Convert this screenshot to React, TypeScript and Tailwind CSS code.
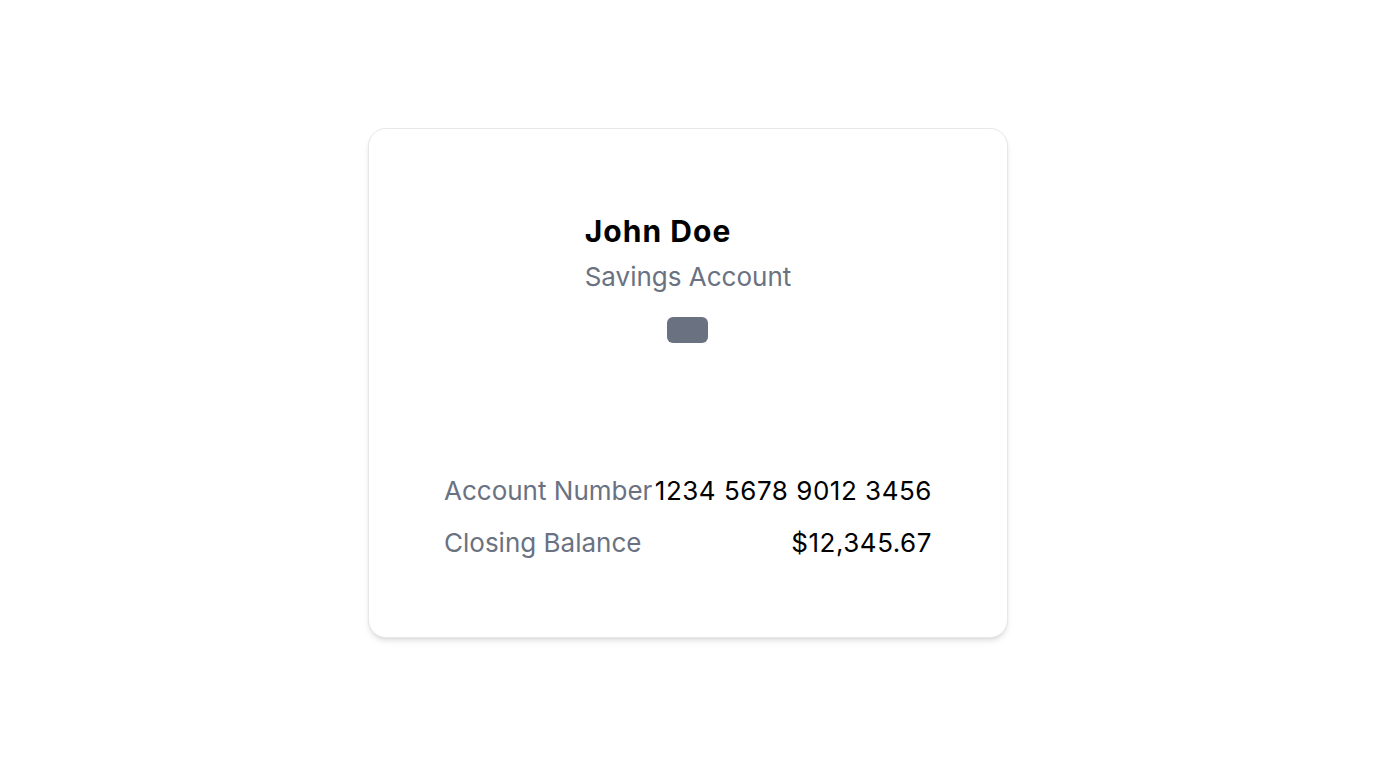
import React from 'react';

const rows = [
  { label: 'Account Number', value: '1234 5678 9012 3456' },
  { label: 'Closing Balance', value: '$12,345.67' },
];

const App: React.FC = () => {
  return (
    <div
      className="min-h-screen w-full bg-white flex justify-center pt-[128px]"
      style={{ fontFamily: 'Inter, "Noto Sans", sans-serif' }}
    >
      <div className="w-[640px] h-[510px] bg-white border border-gray-200 rounded-[18px] shadow-md px-[75px] pt-[84px]">
        <div className="flex justify-center">
          <div>
            <h2 className="text-3xl font-bold tracking-[0.035em] text-black">John Doe</h2>
            <p className="mt-3 text-[26px] leading-8 text-gray-500">Savings Account</p>
            <div className="mt-6 mx-auto w-[41px] h-[26px] rounded-md bg-gray-500" />
          </div>
        </div>

        <div className="mt-[132px] flex flex-col gap-5">
          {rows.map((row) => (
            <div key={row.label} className="flex justify-between text-[26px] leading-8 whitespace-nowrap">
              <span className="text-gray-500">{row.label}</span>
              <span className="text-black tracking-[0.02em]">{row.value}</span>
            </div>
          ))}
        </div>
      </div>
    </div>
  );
};

export default App;
